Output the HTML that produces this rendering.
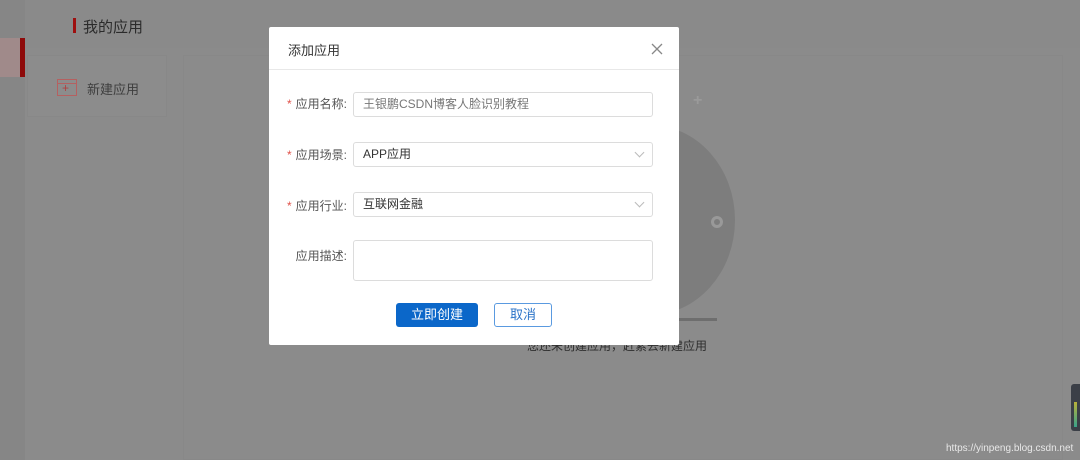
<!DOCTYPE html>
<html><head><meta charset="utf-8"><style>
*{margin:0;padding:0;box-sizing:border-box}
body{width:1080px;height:460px;overflow:hidden;background:#8b8b8b;font-family:"Liberation Sans","Noto Sans CJK SC",sans-serif;position:relative;font-size:13px}
.a{position:absolute}
.lbl{position:absolute;right:733px;color:#555;font-size:12px;text-align:right;white-space:nowrap}
.lbl b{color:#e0524a;font-weight:normal;margin-right:4px}
.inp{position:absolute;left:353px;width:300px;height:25px;border:1px solid #dcdcdc;border-radius:3px;font-size:12px;padding-left:9px;line-height:23px;color:#333}
.chev{position:absolute;right:9px;top:6px;width:7px;height:7px;border-right:1px solid #bbb;border-bottom:1px solid #bbb;transform:rotate(45deg)}
</style></head><body>
<div class="a" style="left:0;top:0;width:25px;height:460px;background:#868686"></div>
<div class="a" style="left:0;top:38px;width:20px;height:39px;background:#a08a8a"></div>
<div class="a" style="left:20px;top:38px;width:5px;height:39px;background:#8e0a0a"></div>
<div class="a" style="left:25px;top:0;width:1055px;height:48px;background:#8a8a8a"></div>
<div class="a" style="left:73px;top:18px;width:3px;height:15px;background:#9e0f0f"></div>
<div class="a" style="left:83px;top:16px;font-size:15px;color:#2b2b2b">我的应用</div>
<div class="a" style="left:27px;top:55px;width:140px;height:62px;border:1px solid #888;background:#8c8c8c"></div>
<div class="a" style="left:57px;top:79px;width:20px;height:17px;border:1px solid #b56060"></div>
<div class="a" style="left:57px;top:83px;width:20px;height:1px;background:#b56060"></div>
<div class="a" style="left:62px;top:81px;font-size:12px;color:#b04040">+</div>
<div class="a" style="left:87px;top:79px;font-size:13px;color:#3e3e3e">新建应用</div>
<div class="a" style="left:183px;top:55px;width:880px;height:405px;border:1px solid #888;background:#8b8b8b"></div>
<div class="a" style="left:565px;top:125px;width:170px;height:190px;border-radius:50%;background:#7d7d7d"></div>
<div class="a" style="left:693px;top:92px;color:#9a9a9a;font-size:16px;font-weight:bold">+</div>
<div class="a" style="left:711px;top:216px;width:12px;height:12px;border:3px solid #999;border-radius:50%"></div>
<div class="a" style="left:677px;top:318px;width:40px;height:3px;background:#6e6e6e"></div>
<div class="a" style="left:527px;top:337px;font-size:12px;color:#2e2e2e">您还未创建应用，赶紧去新建应用</div>
<div class="a" style="left:1071px;top:384px;width:9px;height:47px;background:#3b3f47;border-radius:3px 0 0 3px"></div>
<div class="a" style="left:1074px;top:402px;width:3px;height:25px;background:linear-gradient(#b9b13a,#3aa28a)"></div>
<div class="a" style="left:946px;top:443px;font-size:10px;color:#e8e8e8">https://yinpeng.blog.csdn.net</div>

<div class="a" style="left:269px;top:27px;width:410px;height:318px;background:#fff;border-radius:2px"></div>
<div class="a" style="left:269px;top:69px;width:410px;height:1px;background:#e8e8e8"></div>
<div class="a" style="left:288px;top:40px;font-size:13px;color:#333">添加应用</div>
<svg class="a" style="left:651px;top:43px" width="12" height="12"><path d="M1 1L11 11M11 1L1 11" stroke="#888" stroke-width="1.3"/></svg>
<div class="lbl" style="top:95px"><b>*</b>应用名称:</div>
<div class="inp" style="top:92px;color:#777">王银鹏CSDN博客人脸识别教程</div>
<div class="lbl" style="top:146px"><b>*</b>应用场景:</div>
<div class="inp" style="top:142px">APP应用<span class="chev"></span></div>
<div class="lbl" style="top:197px"><b>*</b>应用行业:</div>
<div class="inp" style="top:192px">互联网金融<span class="chev"></span></div>
<div class="lbl" style="top:247px">应用描述:</div>
<div class="inp" style="top:240px;height:41px"></div>
<div class="a" style="left:396px;top:303px;width:82px;height:24px;background:#0b67c9;border-radius:3px;color:#fff;text-align:center;line-height:24px;font-size:13px">立即创建</div>
<div class="a" style="left:494px;top:303px;width:58px;height:24px;border:1px solid #5a9ae0;border-radius:3px;color:#2a73c8;text-align:center;line-height:22px;font-size:13px">取消</div>
</body></html>
